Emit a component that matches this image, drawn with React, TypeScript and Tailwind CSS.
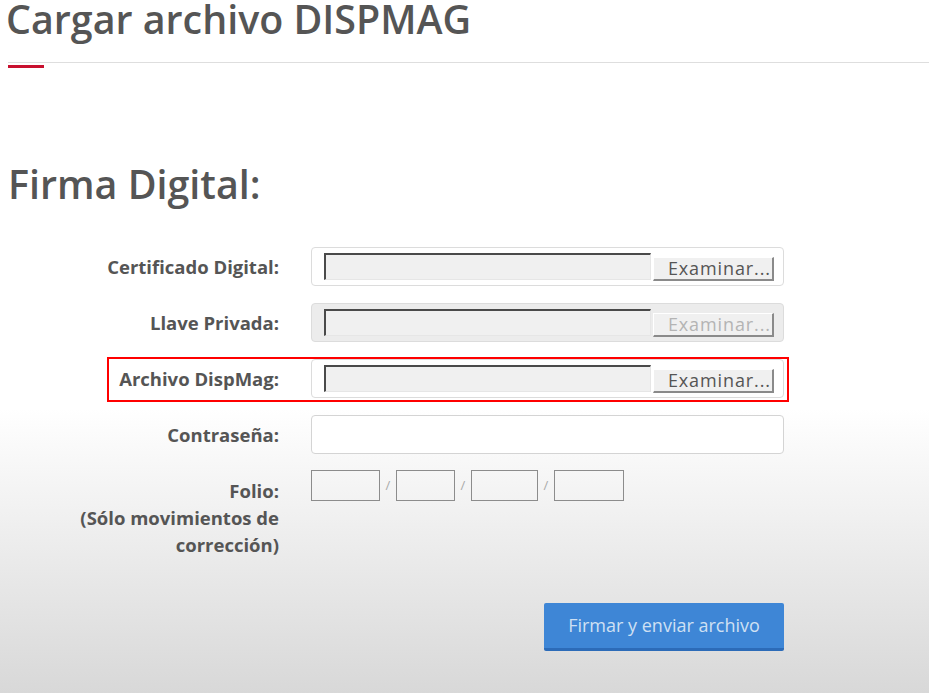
import { ReactNode } from 'react'

const font = { fontFamily: '"Open Sans", "Liberation Sans", sans-serif' }

function FileField({ disabled = false }: { disabled?: boolean }) {
  return (
    <div
      className={`flex h-[39px] w-[473px] items-center rounded-[4px] border border-[#dcdcdc] pl-[12px] ${
        disabled ? 'bg-[#ececec]' : 'bg-white'
      }`}
    >
      {/* native-looking file input: sunken path box + raised button */}
      <div className="h-[27px] w-[327px] border-t-2 border-l-2 border-t-[#4a4a4a] border-l-[#4a4a4a] border-r border-b border-r-[#e6e6e6] border-b-[#e6e6e6] bg-[#f0f0f0]" />
      <div
        className={`ml-[2px] mt-[4px] flex h-[24px] w-[121px] items-center justify-end overflow-hidden whitespace-nowrap border-r-2 border-b-2 border-r-[#8a8a8a] border-b-[#8a8a8a] border-t border-l border-t-white border-l-white bg-[#f0f0f0] pr-[1px] text-[18px] leading-[22px] tracking-[0.9px] ${
          disabled ? 'text-[#b4b4b4]' : 'text-[#555]'
        }`}
      >
        Examinar...
      </div>
    </div>
  )
}

function Row({ label, children }: { label: ReactNode; children: ReactNode }) {
  return (
    <div className="flex items-center">
      <div className="w-[280px] pr-[1px] text-right text-[18.5px] font-bold text-[#555]">{label}</div>
      <div className="ml-[31px]">{children}</div>
    </div>
  )
}

function FolioBox({ w }: { w: string }) {
  return <div className={`h-[31px] border border-[#8c8c8c] bg-transparent ${w}`} />
}

function Slash() {
  return <span className="mx-[5px] w-[6px] text-center text-[13px] text-[#aaa]">/</span>
}

export default function App() {
  return (
    <div
      style={font}
      className="min-h-[693px] w-full bg-[linear-gradient(to_bottom,#ffffff_0%,#ffffff_59%,#d8d8d8_100%)]"
    >
      <div className="pl-[6px] pt-[1px]">
        <h1 className="text-[39.4px] leading-[36px] font-semibold text-[#555]">Cargar archivo DISPMAG</h1>
      </div>
      <div className="mt-[25px] ml-[8px] h-px bg-[#dedede]" />
      <div className="ml-[8px] mt-[2px] h-[3px] w-[36px] bg-[#c8102e]" />

      <h2 className="mt-[98px] pl-[8px] text-[39.4px] leading-[36px] font-semibold text-[#555]">Firma Digital:</h2>

      <div className="mt-[45px] flex flex-col gap-[17px]">
        <Row label="Certificado Digital:">
          <FileField />
        </Row>
        <Row label="Llave Privada:">
          <FileField disabled />
        </Row>
        <div className="relative">
          <Row label="Archivo DispMag:">
            <FileField />
          </Row>
          <span className="pointer-events-none absolute left-[107px] top-[-2px] h-[45px] w-[682px] border-2 border-[#ff0000]" />
        </div>
        <Row label="Contraseña:">
          <div className="h-[39px] w-[473px] rounded-[4px] border border-[#d4d4d4] bg-white" />
        </Row>
      </div>

      <div className="mt-[16px] flex items-start">
        <div className="mt-[7px] w-[280px] pr-[1px] text-right text-[18.5px] leading-[27px] font-bold text-[#555]">
          Folio:
          <br />
          (Sólo movimientos de
          <br />
          corrección)
        </div>
        <div className="ml-[31px] flex items-center">
          <FolioBox w="w-[69px]" />
          <Slash />
          <FolioBox w="w-[59px]" />
          <Slash />
          <FolioBox w="w-[67px]" />
          <Slash />
          <FolioBox w="w-[70px]" />
        </div>
      </div>

      <div className="mt-[45px] flex pl-[544px] pb-[40px]">
        <button className="h-[48px] w-[240px] rounded-[2px] border-b-[3px] border-[#2c6bb8] bg-[#3e86d6] text-[18px] text-[#cfe0f3]">
          Firmar y enviar archivo
        </button>
      </div>
    </div>
  )
}
